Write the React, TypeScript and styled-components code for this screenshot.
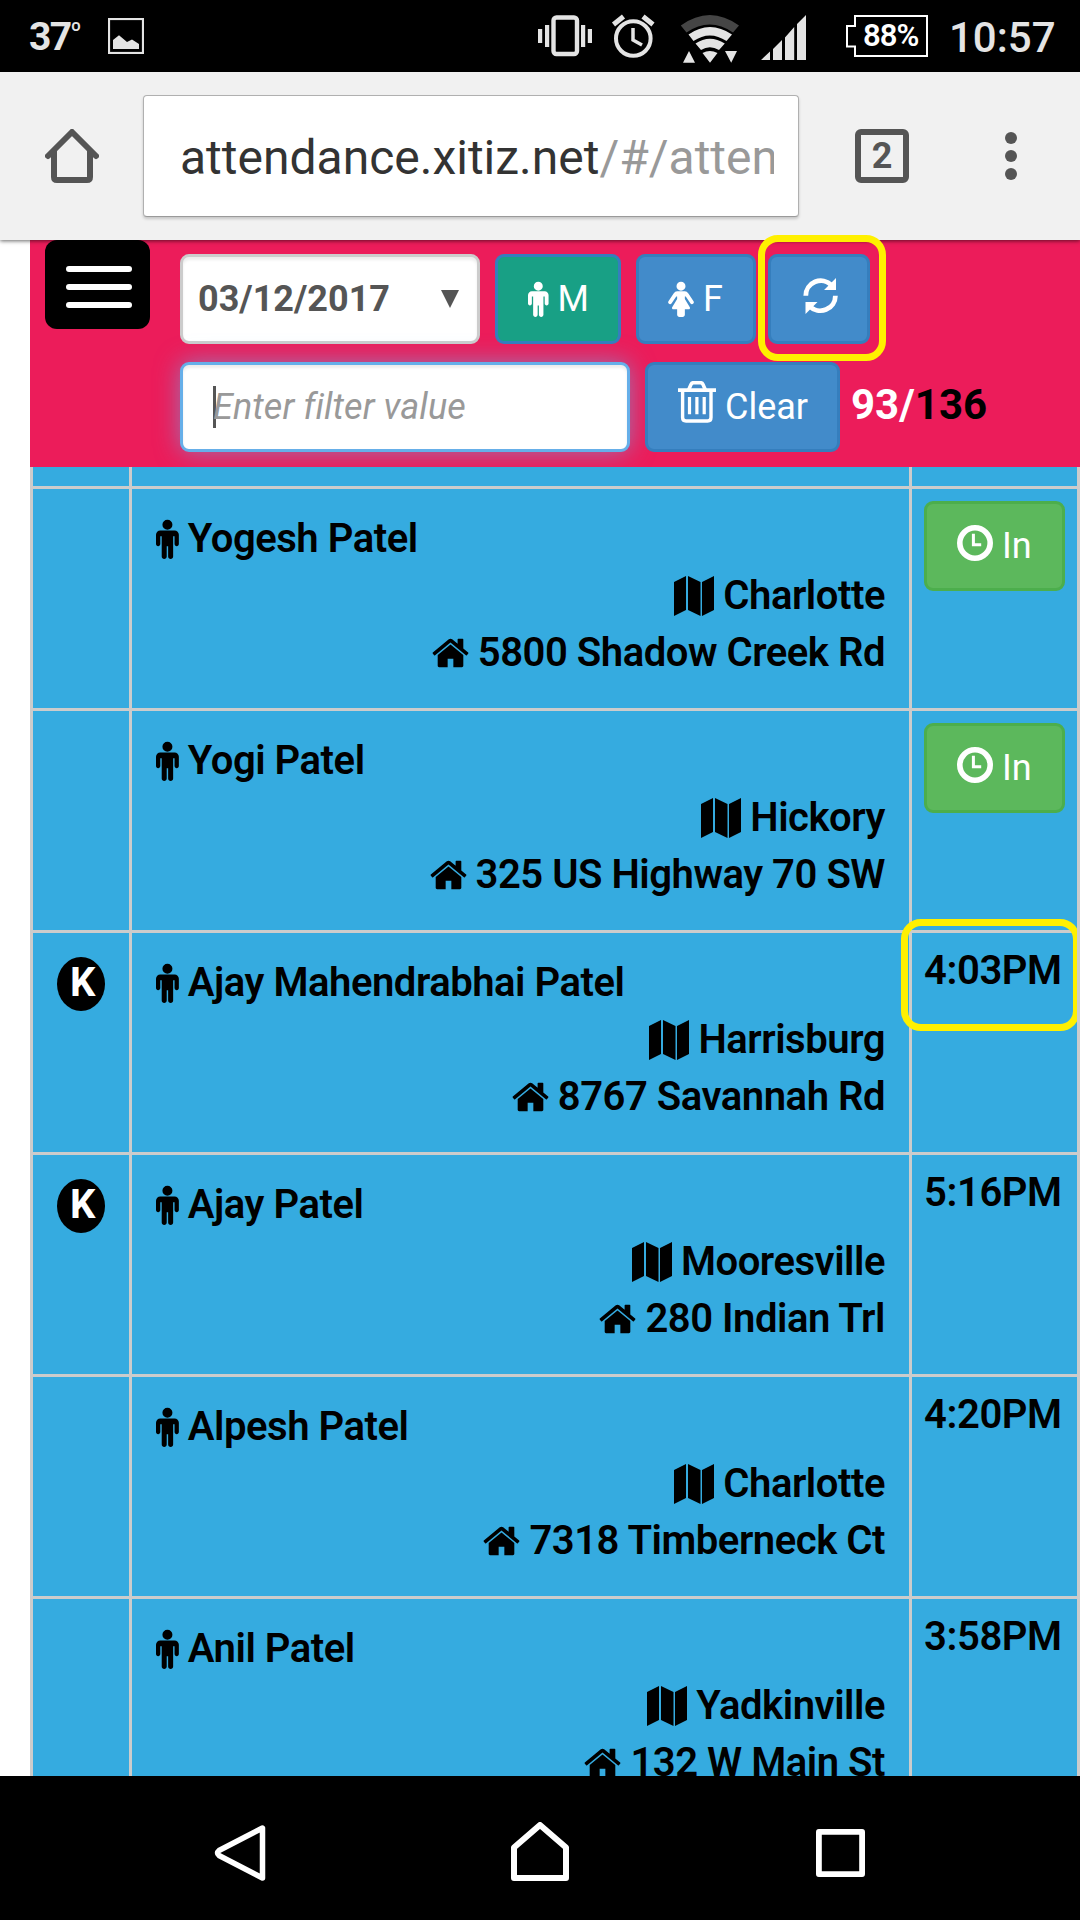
import React from 'react';
import styled, { createGlobalStyle } from 'styled-components';

const GlobalStyle = createGlobalStyle`
  *, *::before, *::after { box-sizing: border-box; }
  body {
    margin: 0;
    background: #fff;
    font-family: Roboto, "Noto Sans", sans-serif;
  }
  svg { display: block; flex: none; }
`;

const Phone = styled.div`
  width: 1080px;
  height: 1920px;
  display: flex;
  flex-direction: column;
  overflow: hidden;
`;

/* ---------- Android status bar ---------- */

const StatusBar = styled.header`
  flex: none;
  height: 72px;
  display: flex;
  align-items: flex-start;
  justify-content: space-between;
  background: #000;
  color: #e4e4e4;
`;

const StatusGroup = styled.div`
  height: 72px;
  display: flex;
  align-items: flex-start;
`;

const Temperature = styled.span`
  margin: 14px 0 0 29px;
  width: 79px;
  font-size: 39px;
  font-weight: 700;
  line-height: 46px;
  letter-spacing: -1.6px;
  display: flex;
`;

const Degree = styled.span`
  font-size: 24px;
  font-weight: 700;
  line-height: 28px;
  padding-top: 3px;
`;

const PictureSlot = styled.span`
  padding-top: 18px;
`;

const Battery = styled.span`
  margin: 15px 0 0 39px;
  width: 82px;
  height: 42px;
  display: grid;

  > * { grid-area: 1 / 1; }
`;

const BatteryLevel = styled.span`
  padding-left: 17px;
  font-size: 31px;
  font-weight: 650;
  line-height: 42px;
  letter-spacing: -0.9px;
  color: #fff;
`;

const Clock = styled.span`
  margin: 13px 24px 0 21px;
  font-size: 42px;
  font-weight: 500;
  line-height: 50px;
  width: 107px;
`;

/* ---------- Browser bar ---------- */

const BrowserBar = styled.nav`
  flex: none;
  height: 168px;
  display: flex;
  align-items: flex-start;
  padding: 23px 0 0 45px;
  background: #f1f1f1;
  position: relative;
  z-index: 1;
  box-shadow: 0 1px 4px rgba(0, 0, 0, 0.6);
`;

const Address = styled.div`
  width: 656px;
  height: 122px;
  margin: 0 56px 0 44px;
  padding: 1px 24px 0 36px;
  border: 1px solid #b0b0b0;
  border-bottom-color: #9a9a9a;
  border-radius: 4px;
  background: #fff;
  box-shadow: 0 2px 3px rgba(0, 0, 0, 0.18);
`;

const Url = styled.div`
  overflow: hidden;
  white-space: nowrap;
  font-size: 48px;
  line-height: 121px;
  color: #333;

  span { color: #999; }
`;

const BarIcon = styled.span`
  margin-top: 34px;
`;

const TabCount = styled.span`
  width: 54px;
  height: 54px;
  margin-top: 34px;
  border: 6px solid #555;
  border-radius: 6px;
  color: #555;
  font-size: 36px;
  font-weight: 700;
  line-height: 43px;
  text-align: center;
`;

const Dots = styled.span`
  margin: 37px 0 0 96px;
  display: grid;
  gap: 6px;

  i {
    width: 12px;
    height: 12px;
    border-radius: 50%;
    background: #555;
  }
`;

/* ---------- Page ---------- */

const Page = styled.main`
  flex: none;
  height: 1536px;
  padding-left: 30px;
  background: #fff;
  display: flex;
  flex-direction: column;
`;

const Toolbar = styled.section`
  flex: none;
  height: 227px;
  padding-left: 15px;
  background: #ec1c5a;
  display: flex;
  gap: 30px;
`;

const MenuButton = styled.button`
  width: 105px;
  height: 89px;
  padding: 26px 0 0 21px;
  border: 0;
  border-radius: 12px;
  background: #000;
  display: flex;
  flex-direction: column;
  gap: 12px;

  i {
    width: 66px;
    height: 6px;
    border-radius: 3px;
    background: #fff;
  }
`;

const Controls = styled.div`
  padding-top: 14px;
  display: flex;
  flex-direction: column;
  gap: 18px;
`;

const ControlRow = styled.div`
  height: 90px;
  display: flex;
`;

const DateSelect = styled.div`
  width: 300px;
  margin-right: 15px;
  padding: 0 18px 0 15px;
  border: 3px solid #ccc;
  border-radius: 9px;
  background: #fff;
  box-shadow: inset 0 3px 3px rgba(0, 0, 0, 0.075);
  color: #555;
  font-size: 36px;
  font-weight: 700;
  line-height: 84px;
  display: flex;
  align-items: center;
  justify-content: space-between;
`;

const FilterInput = styled.div`
  width: 450px;
  margin-right: 15px;
  padding: 21px 0 0 30px;
  border: 3px solid #66afe9;
  border-radius: 9px;
  background: #fff;
  box-shadow: inset 0 3px 3px rgba(0, 0, 0, 0.075), 0 0 24px rgba(102, 175, 233, 0.6);
  display: flex;
`;

const Caret = styled.i`
  width: 3px;
  height: 42px;
  margin-right: -3px;
  background: #555;
`;

const Placeholder = styled.span`
  font-size: 36px;
  font-style: italic;
  line-height: 42px;
  letter-spacing: 0.08px;
  color: #999;
  white-space: nowrap;
`;

const Button = styled.button<{ $w: number; $pad: number; $gap?: number; $bg?: string; $edge?: string }>`
  position: relative;
  width: ${(p) => p.$w}px;
  height: 90px;
  padding: 0 0 0 ${(p) => p.$pad}px;
  border: 3px solid ${(p) => p.$edge || '#357ebd'};
  border-radius: 9px;
  background: ${(p) => p.$bg || '#428bca'};
  color: #fff;
  font: 400 36px/84px Roboto, sans-serif;
  display: flex;
  align-items: center;
  gap: ${(p) => p.$gap || 9}px;

  & + & { margin-left: 15px; }
`;

const RefreshButton = styled(Button)`
  && { margin-left: 12px; }
`;

const Lift = styled.span<{ $y: number }>`
  margin-bottom: ${(p) => p.$y}px;
`;

const Marker = styled.span<{ $t: number; $l: number; $w: number; $h: number }>`
  position: absolute;
  z-index: 2;
  top: ${(p) => p.$t}px;
  left: ${(p) => p.$l}px;
  width: ${(p) => p.$w}px;
  height: ${(p) => p.$h}px;
  border: 7px solid #fff000;
  border-radius: 20px;
`;

const Count = styled.span`
  padding-left: 11px;
  font-size: 42px;
  font-weight: 700;
  line-height: 86px;
  color: #fff;

  b { font-weight: 700; color: #000; }
`;

/* ---------- Attendance table ---------- */

const Table = styled.section`
  flex: 1;
  min-height: 0;
  overflow: hidden;
  border-left: 3px solid #ccc;
  border-right: 3px solid #ccc;
  background: #35abe0;
  color: #000;
  font-size: 40px;
  font-weight: 620;
  line-height: 57px;
  letter-spacing: -0.46px;
`;

const Row = styled.article<{ $h?: number }>`
  height: ${(p) => p.$h || 222}px;
  display: grid;
  grid-template-columns: 99px 780px 165px;
  border-bottom: 3px solid #ccc;
`;

const Cell = styled.div`
  position: relative;
  border-right: 3px solid #ccc;

  &:last-child { border-right: 0; }
`;

const TagCell = styled(Cell)`
  padding: 24px 0 0 24px;
`;

const Tag = styled.span`
  width: 48px;
  height: 54px;
  border-radius: 50%;
  background: #000;
  color: #fff;
  font-weight: 700;
  line-height: 51px;
  display: block;
  padding-left: 13px;
`;

const PersonCell = styled(Cell)`
  padding: 21px 24px 0;
`;

const Line = styled.div<{ $end?: boolean }>`
  height: 57px;
  display: flex;
  align-items: center;
  justify-content: ${(p) => (p.$end ? 'flex-end' : 'flex-start')};
  gap: 9px;
  white-space: nowrap;
`;

const TimeCell = styled(Cell)`
  padding: 9px 0 0 12px;
  letter-spacing: -0.4px;
`;

const InWrap = styled.div`
  padding-top: 3px;
`;

/* ---------- Android navigation ---------- */

const NavBar = styled.footer`
  flex: none;
  height: 144px;
  background: #000;
  display: flex;
  align-items: center;
  padding: 10px 0 0 213px;
`;

const NavItem = styled.span<{ $ml?: number }>`
  margin-left: ${(p) => p.$ml || 0}px;
`;

/* ---------- Icons ---------- */

const MaleIcon = ({ size = 40 }: { size?: number }) => (
  <svg width={(size * 1024) / 1792} height={size} viewBox="0 0 1024 1792" fill="currentColor">
    <path d="M1024 704v416q0 40-28 68t-68 28-68-28-28-68v-352h-64v912q0 46-33 79t-79 33-79-33-33-79v-464h-64v464q0 46-33 79t-79 33-79-33-33-79v-912h-64v352q0 40-28 68t-68 28-68-28-28-68v-416q0-80 56-136t136-56h640q80 0 136 56t56 136zM736 256q0 93-65.5 158.5t-158.5 65.5-158.5-65.5-65.5-158.5 65.5-158.5 158.5-65.5 158.5 65.5 65.5 158.5z" />
  </svg>
);

const FemaleIcon = () => (
  <svg width="26" height="36" viewBox="0 0 1280 1792" fill="currentColor">
    <path d="M1280 1056q0 40-28 68t-68 28q-51 0-80-43l-227-341h-45v132l247 411q9 15 9 33 0 26-19 45t-45 19h-192v272q0 46-33 79t-79 33h-160q-46 0-79-33t-33-79v-272h-192q-26 0-45-19t-19-45q0-18 9-33l247-411v-132h-45l-227 341q-29 43-80 43-40 0-68-28t-28-68q0-29 16-53l256-384q73-107 176-107h384q103 0 176 107l256 384q16 24 16 53zM864 256q0 93-65.5 158.5t-158.5 65.5-158.5-65.5-65.5-158.5 65.5-158.5 158.5-65.5 158.5 65.5 65.5 158.5z" />
  </svg>
);

const HomeIcon = () => (
  <svg width="37" height="40" viewBox="0 0 1664 1792" fill="currentColor">
    <path d="M1408 992v480q0 26-19 45t-45 19h-384v-384h-256v384h-384q-26 0-45-19t-19-45v-480q0-1 .5-3t.5-3l575-474 575 474q1 2 1 6zM1631 923l-62 74q-8 9-21 11h-3q-13 0-21-7l-692-577-692 577q-12 8-24 7-13-2-21-11l-62-74q-8-10-7-23.5t11-21.5l719-599q32-26 76-26t76 26l244 204v-195q0-14 9-23t23-9h192q14 0 23 9t9 23v408l219 182q10 8 11 21.5t-7 23.5z" />
  </svg>
);

const MapIcon = () => (
  <svg width="40" height="40" viewBox="0 0 40 40" fill="currentColor">
    <path d="M0 6 12 0V34L0 40ZM14 0 26.500 6V40L14 34ZM28 6 40 0V34L28 40Z" />
  </svg>
);

const RefreshIcon = () => (
  <svg width="36" height="36" viewBox="0 0 36 36">
    <path d="M2.800 17.700A15 15 0 0 1 28.500 7.200M32.400 17.700A15 15 0 0 1 6.700 28.200" fill="none" stroke="currentColor" strokeWidth="4.800" />
    <path d="M33 0V12H21ZM2.500 36V24H14.500Z" fill="currentColor" />
  </svg>
);

const TrashIcon = () => (
  <svg width="38" height="42" viewBox="0 0 38 42" fill="none" stroke="currentColor">
    <path d="M0 9.200H38" strokeWidth="3.800" />
    <path d="M10.600 9 13 3.400Q13.800 1.700 15.600 1.700H22.400Q24.200 1.700 25 3.400L27.400 9" strokeWidth="3.600" />
    <path d="M4.600 9V36.500Q4.600 40 8 40H29.600Q33 40 33 36.500V9" strokeWidth="3.400" />
    <path d="M11.500 16V33.300M18.900 16V33.300M26.200 16V33.300" strokeWidth="3.200" />
  </svg>
);

const ClockIcon = () => (
  <svg width="36" height="36" viewBox="0 0 36 36" fill="none" stroke="currentColor">
    <circle cx="18" cy="18" r="15.200" strokeWidth="5.600" />
    <path d="M16.400 8.800V19.800H24.200" strokeWidth="3" />
  </svg>
);

const PictureIcon = () => (
  <svg width="36" height="36" viewBox="0 0 36 36">
    <rect x="1" y="1" width="34" height="34" fill="none" stroke="#e4e4e4" strokeWidth="2.200" />
    <path d="M5 22 11 17.300 19 24 24 21.500 31 26V31H5Z" fill="#e4e4e4" />
  </svg>
);

const SignalIcons = () => (
  <svg width="269" height="72" viewBox="538 0 269 72" fill="#e4e4e4">
    <rect x="553.500" y="17.500" width="23.500" height="36.500" rx="3" fill="none" stroke="#e4e4e4" strokeWidth="4.400" />
    <path d="M538 29h4.200v14h-4.200ZM545 25h4.200v22H545ZM581 25h4.200v22H581ZM587.800 29h4.200v14h-4.200Z" />
    <g fill="none" stroke="#e4e4e4">
      <circle cx="633.300" cy="38.500" r="17.300" strokeWidth="4" />
      <path d="M633 28V40L642 45" strokeWidth="3.500" />
      <path d="M613.500 24.500 623.500 16.500M653 24.500 643 16.500" strokeWidth="5" />
    </g>
    <path d="M680.800 25.500Q709.800 4.500 739 25.500L733 32.500Q709.800 16.500 686.500 32.500Z" fill="#454545" />
    <path d="M688.500 34.500Q709.800 19.500 732 34.500L726.500 41Q709.800 29.800 693.500 41ZM695.500 43.500Q709.800 34 724.800 43.500L719 50Q709.800 44.500 701 50ZM702.500 53Q709.800 48.800 717.500 53L710 62.700ZM683 62.700 689 51 695 62.700ZM725 51H737L731.200 62.700Z" />
    <path d="M761 60 770 51.500V60ZM773 49 782 40V60H773ZM785 37.500 794.200 27V60H785ZM797 24 806 15V60H797Z" />
  </svg>
);

/* ---------- Data ---------- */

type Person = { name: string; city: string; street: string; time?: string; k?: boolean; marked?: boolean };

const people: Person[] = [
  { name: 'Yogesh Patel', city: 'Charlotte', street: '5800 Shadow Creek Rd' },
  { name: 'Yogi Patel', city: 'Hickory', street: '325 US Highway 70 SW' },
  { name: 'Ajay Mahendrabhai Patel', city: 'Harrisburg', street: '8767 Savannah Rd', time: '4:03PM', k: true, marked: true },
  { name: 'Ajay Patel', city: 'Mooresville', street: '280 Indian Trl', time: '5:16PM', k: true },
  { name: 'Alpesh Patel', city: 'Charlotte', street: '7318 Timberneck Ct', time: '4:20PM' },
  { name: 'Anil Patel', city: 'Yadkinville', street: '132 W Main St', time: '3:58PM' },
];

const PersonRow = ({ person }: { person: Person }) => (
  <Row>
    <TagCell>{person.k && <Tag>K</Tag>}</TagCell>
    <PersonCell>
      <Line><MaleIcon />{person.name}</Line>
      <Line $end><MapIcon />{person.city}</Line>
      <Line $end><HomeIcon />{person.street}</Line>
    </PersonCell>
    <TimeCell>
      {person.marked && <Marker $t={-14} $l={-11} $w={179} $h={112} />}
      {person.time || (
        <InWrap>
          <Button $w={141} $pad={30} $bg="#5cb85c" $edge="#4cae4c">
            <Lift $y={6}><ClockIcon /></Lift>In
          </Button>
        </InWrap>
      )}
    </TimeCell>
  </Row>
);

export default function App() {
  return (
    <Phone>
      <GlobalStyle />
      <StatusBar>
        <StatusGroup>
          <Temperature>37<Degree>º</Degree></Temperature>
          <PictureSlot><PictureIcon /></PictureSlot>
        </StatusGroup>
        <StatusGroup>
          <SignalIcons />
          <Battery>
            <svg width="82" height="42" viewBox="0 0 82 42" fill="none" stroke="#fff" strokeWidth="2">
              <path d="M9 1H81V41H9V31.500H1V11H9Z" />
            </svg>
            <BatteryLevel>88%</BatteryLevel>
          </Battery>
          <Clock>10:57</Clock>
        </StatusGroup>
      </StatusBar>

      <BrowserBar>
        <BarIcon>
          <svg width="54" height="54" viewBox="0 0 54 54" fill="none" stroke="#555" strokeWidth="6">
            <path d="M3 27 27 3 51 27" strokeLinecap="round" strokeLinejoin="round" />
            <path d="M9 22V48Q9 51 12 51H42Q45 51 45 48V22" />
          </svg>
        </BarIcon>
        <Address><Url>attendance.xitiz.net<span>/#/atten</span></Url></Address>
        <TabCount>2</TabCount>
        <Dots><i /><i /><i /></Dots>
      </BrowserBar>

      <Page>
        <Toolbar>
          <MenuButton aria-label="Menu"><i /><i /><i /></MenuButton>
          <Controls>
            <ControlRow>
              <DateSelect>
                03/12/2017
                <svg width="18" height="18" viewBox="0 0 18 18"><path d="M0 0H18L9 18Z" fill="#555" /></svg>
              </DateSelect>
              <Button $w={126} $pad={30} $bg="#18a085"><MaleIcon size={36} />M</Button>
              <Button $w={120} $pad={29}><FemaleIcon />F</Button>
              <RefreshButton $w={102} $pad={32} aria-label="Refresh">
                <Lift $y={6}><RefreshIcon /></Lift>
                <Marker $t={-22} $l={-13} $w={128} $h={126} />
              </RefreshButton>
            </ControlRow>
            <ControlRow>
              <FilterInput><Caret /><Placeholder>Enter filter value</Placeholder></FilterInput>
              <Button $w={195} $pad={30}><Lift $y={10}><TrashIcon /></Lift>Clear</Button>
              <Count>93/<b>136</b></Count>
            </ControlRow>
          </Controls>
        </Toolbar>

        <Table>
          <Row $h={22}><Cell /><Cell /><Cell /></Row>
          {people.map((p) => <PersonRow key={p.name} person={p} />)}
        </Table>
      </Page>

      <NavBar>
        <NavItem>
          <svg width="54" height="62" viewBox="213 1822 54 62" fill="none" stroke="#fff" strokeWidth="5.500" strokeLinejoin="round">
            <path d="M262.500 1828V1878L219 1855.500Q216 1853 219 1850.500Z" />
          </svg>
        </NavItem>
        <NavItem $ml={242}>
          <svg width="62" height="62" viewBox="509 1822 62 62" fill="none" stroke="#fff" strokeWidth="6" strokeLinejoin="round">
            <path d="M514 1847.500 540 1825 566 1847.500V1878H514Z" />
          </svg>
        </NavItem>
        <NavItem $ml={245}>
          <svg width="49" height="48" viewBox="0 0 49 48" fill="none" stroke="#fff" strokeWidth="5.800" strokeLinejoin="round">
            <path d="M2.900 2.900H46.100V45.100H2.900Z" />
          </svg>
        </NavItem>
      </NavBar>
    </Phone>
  );
}
